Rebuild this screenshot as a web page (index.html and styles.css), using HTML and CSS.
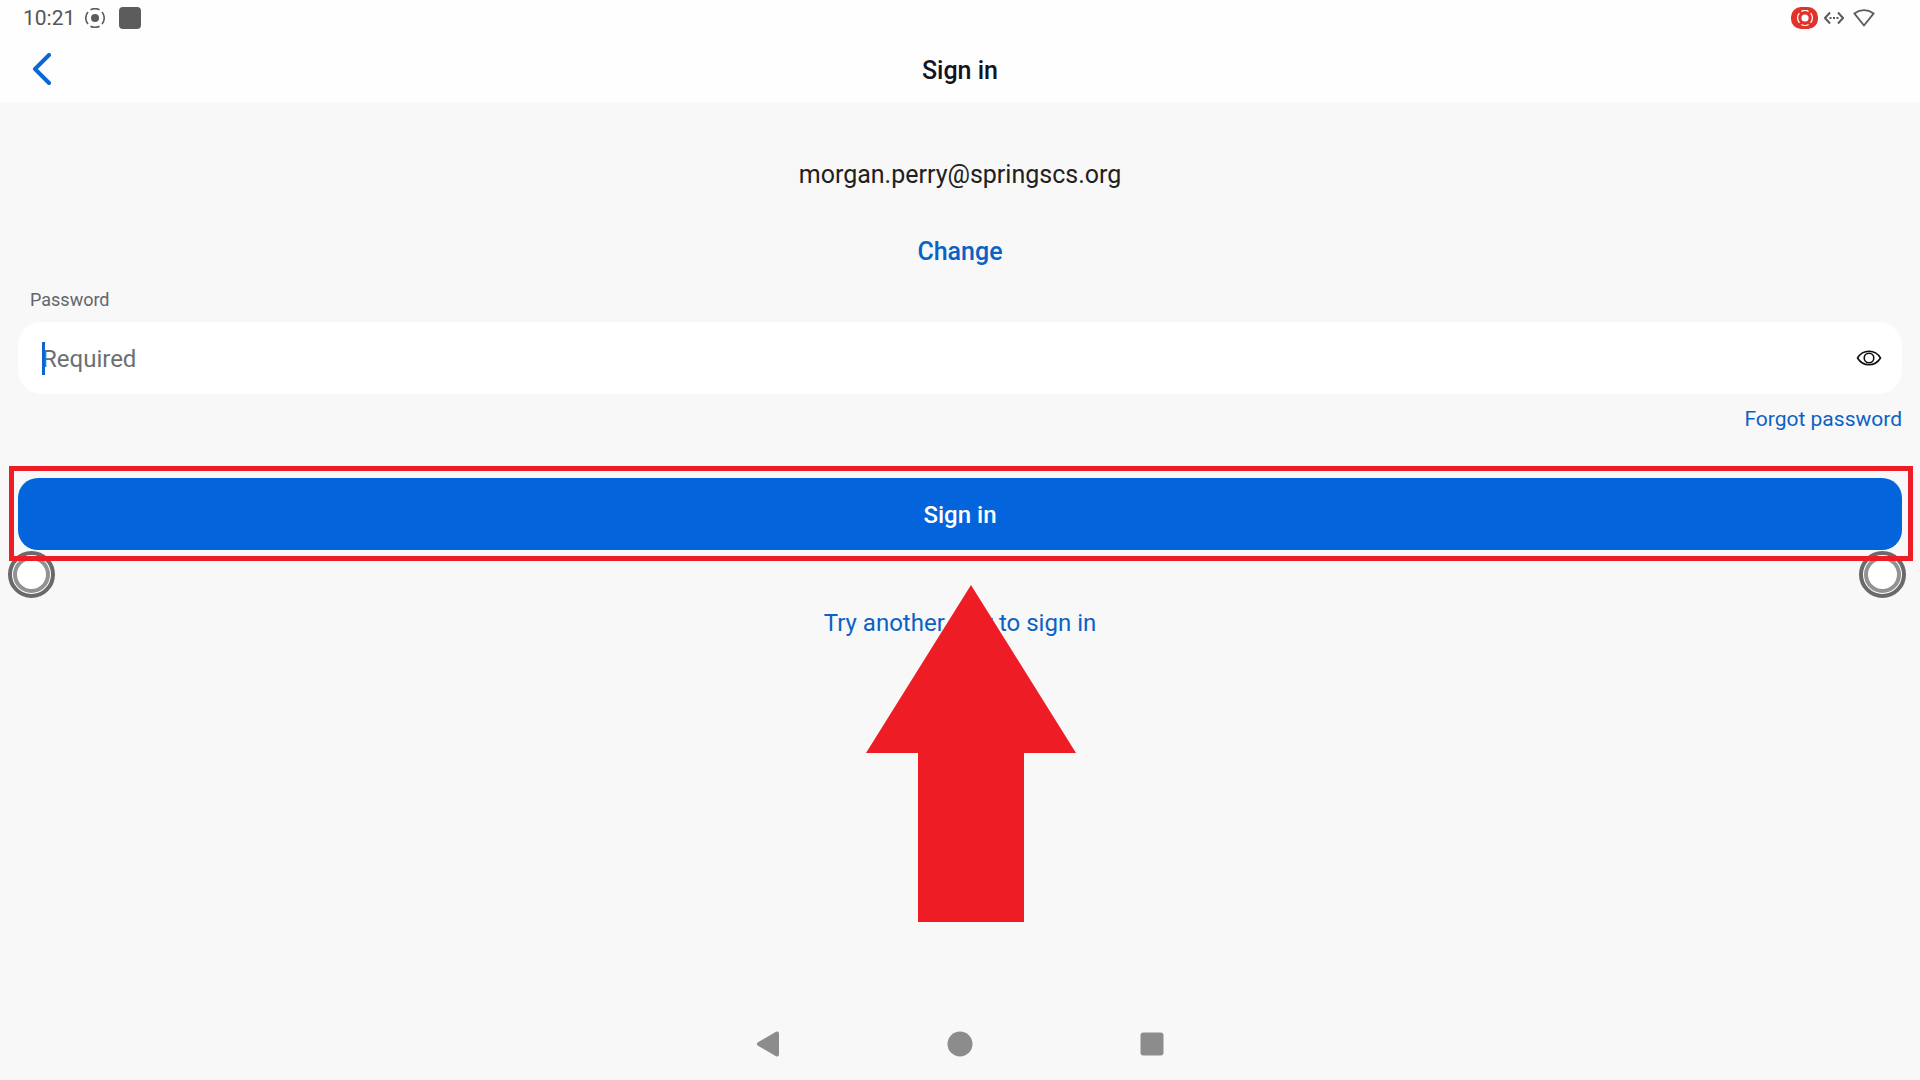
FILE: index.html
```html
<!DOCTYPE html>
<html lang="en">
<head>
<meta charset="UTF-8" />
<meta name="viewport" content="width=device-width, initial-scale=1" />
<title>Sign in</title>
<link rel="stylesheet" href="styles.css">
</head>
<body>

<div class="status-bar">
  <div class="status-left">
    <span class="clock">10:21</span>
    <svg class="record-icon" width="20" height="20" viewBox="0 0 20 20">
      <circle cx="10" cy="10" r="4" fill="#5c5c5c" />
      <path d="M5.5 1.8A9.4 9.4 0 0 1 14.500 1.800M17 4A9.200 9.200 0 0 1 17 16M14.500 18.200A9.400 9.400 0 0 1 5.500 18.200M3 16A9.200 9.200 0 0 1 3 4" fill="none" stroke="#5c5c5c" stroke-width="1.6" />
    </svg>
    <span class="app-square"></span>
  </div>
  <div class="status-right">
    <span class="cast-badge">
      <svg width="16" height="16" viewBox="0 0 20 20">
        <circle cx="10" cy="10" r="4.5" fill="#fff" />
        <path d="M5.5 1.8A9.4 9.4 0 0 1 14.500 1.800M17 4A9.200 9.200 0 0 1 17 16M14.500 18.200A9.400 9.400 0 0 1 5.500 18.200M3 16A9.200 9.200 0 0 1 3 4" fill="none" stroke="#fff" stroke-width="1.6" />
      </svg>
    </span>
    <svg width="20" height="14" viewBox="0 0 20 14">
      <path d="M6 1.5L1 7L6 12.5M14 1.5L19 7L14 12.5" fill="none" stroke="#5c5c5c" stroke-width="2" />
      <path d="M5.5 7h2M9 7h2M12.5 7h2" stroke="#5c5c5c" stroke-width="2" />
    </svg>
    <svg class="wifi-icon" width="22" height="18" viewBox="0 0 22 18">
      <path d="M1.3 4.4Q11 -2 20.7 4.4L11 16.5Z" fill="none" stroke="#5c5c5c" stroke-width="1.8" stroke-linejoin="round" />
    </svg>
  </div>
</div>

<header>
  <button class="btn-back" type="button" aria-label="Back">
    <svg width="20" height="32" viewBox="0 0 20 32">
      <path d="M17 2L3 16L17 30" fill="none" stroke="#0b67d3" stroke-width="4" stroke-linecap="round" stroke-linejoin="round" />
    </svg>
  </button>
  <h1>Sign in</h1>
</header>

<main>
  <form>
    <p class="email">morgan.perry@springscs.org</p>
    <a class="change" href="#">Change</a>

    <label for="password">Password</label>
    <div class="field">
      <input id="password" type="password" placeholder="Required" />
      <span class="caret"></span>
      <button class="btn-eye" type="button" aria-label="Show password">
        <svg width="26" height="18" viewBox="0 0 26 18">
          <path d="M1.5 9C7 0 19 0 24.5 9C19 18 7 18 1.5 9Z" fill="none" stroke="#111" stroke-width="1.6" stroke-linejoin="round" />
          <circle cx="13" cy="9" r="4.8" fill="none" stroke="#111" stroke-width="1.6" />
        </svg>
      </button>
    </div>
    <a class="forgot" href="#">Forgot password</a>

    <div class="submit">
      <button class="btn-sign-in" type="submit">Sign in</button>
      <span class="handle handle-left"></span>
      <span class="handle handle-right"></span>
      <span class="highlight"></span>
      <svg class="arrow" width="210" height="337" viewBox="0 0 210 337">
        <path d="M105 0L210 168H158V337H52V168H0Z" fill="#ee1c24" />
      </svg>
    </div>
    <a class="another" href="#">Try another way to sign in</a>
  </form>
</main>

<nav>
  <button type="button" aria-label="Back">
    <svg width="26" height="26" viewBox="0 0 26 26">
      <path d="M4 13L22 2.5V23.5Z" fill="#8c8c8c" stroke="#8c8c8c" stroke-width="4" stroke-linejoin="round" />
    </svg>
  </button>
  <button type="button" aria-label="Home">
    <svg width="26" height="26" viewBox="0 0 26 26">
      <circle cx="13" cy="13" r="12.5" fill="#8c8c8c" />
    </svg>
  </button>
  <button type="button" aria-label="Recent apps">
    <svg width="26" height="26" viewBox="0 0 26 26">
      <rect x="1.5" y="1.5" width="23" height="23" rx="3" fill="#8c8c8c" />
    </svg>
  </button>
</nav>

</body>
</html>
```
FILE: styles.css
```css
* {
  box-sizing: border-box;
}
body {
  font-family: Roboto, "Liberation Sans", sans-serif;
  background: #f8f8f8;
  color: #212121;
  margin: 0;
  min-height: 100vh;
  display: flex;
  flex-direction: column;
}
button {
  font-family: inherit;
  background: none;
  border: none;
  padding: 0;
  cursor: pointer;
}
svg {
  display: block;
}
a {
  color: #0b62c4;
  text-decoration: none;
}

/* Status bar */
.status-bar {
  background: #fefefe;
  height: 36px;
  padding: 0 45px 0 23px;
  display: flex;
  justify-content: space-between;
  align-items: center;
}
.status-left, .status-right {
  display: flex;
  align-items: center;
}
.clock {
  font-size: 21px;
  color: #555;
}
.record-icon {
  margin: 0 14px 0 10px;
}
.app-square {
  width: 22px;
  height: 22px;
  border-radius: 4px;
  background: #5c5c5c;
}
.status-right {
  gap: 6px;
}
.wifi-icon {
  margin-left: 3px;
}
.cast-badge {
  width: 27px;
  height: 22px;
  border-radius: 10px;
  background: #e2332b;
  display: flex;
  align-items: center;
  justify-content: center;
}

/* Header */
header {
  background: #fefefe;
  height: 66px;
  padding: 0 32px;
  display: grid;
  grid-template-columns: 1fr auto 1fr;
  align-items: center;
}
.btn-back {
  justify-self: start;
}
h1 {
  margin: 0;
  padding-top: 4px;
  font-size: 25px;
  line-height: 32px;
  font-weight: 500;
  color: #14141f;
}

/* Form */
main {
  flex: 1;
  padding: 57px 18px 0;
}
form {
  display: flex;
  flex-direction: column;
}
.email {
  margin: 0 0 45px;
  font-size: 25px;
  line-height: 32px;
  text-align: center;
}
.change {
  align-self: center;
  font-size: 25px;
  line-height: 32px;
  font-weight: 500;
}
label {
  margin: 20px 12px 10px;
  font-size: 18px;
  line-height: 24px;
  color: #62666c;
}
.field {
  position: relative;
  display: flex;
  align-items: center;
  height: 72px;
  padding: 0 20px 0 24px;
  background: #fff;
  border-radius: 24px;
}
.field input {
  flex: 1;
  padding: 2px 0 0;
  border: none;
  outline: none;
  background: none;
  font-family: inherit;
  font-size: 24px;
  line-height: 32px;
}
.field input::placeholder {
  color: #6b6f75;
  opacity: 1;
}
.caret {
  position: absolute;
  left: 24px;
  top: 20px;
  width: 3px;
  height: 33px;
  background: #1265cf;
}
.forgot {
  align-self: flex-end;
  margin: 13px 0 47px;
  font-size: 21px;
  line-height: 24px;
}
.submit {
  position: relative;
}
.btn-sign-in {
  display: block;
  width: 100%;
  height: 72px;
  padding-top: 2px;
  border-radius: 20px;
  background: #0364dc;
  color: #fff;
  font-size: 24px;
  line-height: 32px;
  font-weight: 500;
}
.another {
  align-self: center;
  margin-top: 57px;
  font-size: 24px;
  line-height: 32px;
}

/* Round handles under the button corners */
.handle {
  position: absolute;
  top: 73px;
  width: 47px;
  height: 47px;
  border: 4px solid #6a6a6a;
  border-radius: 50%;
  background: #fff;
}
.handle::after {
  content: "";
  position: absolute;
  inset: 1px;
  border: 4px solid #929292;
  border-radius: 50%;
}
.handle-left {
  left: -10px;
}
.handle-right {
  right: -4px;
}

/* Red callout */
.highlight {
  position: absolute;
  inset: -12px -11px -11px -9px;
  border: 5px solid #ee1c24;
  pointer-events: none;
}
.arrow {
  position: absolute;
  top: 107px;
  left: calc(50% - 94px);
  pointer-events: none;
}

/* Android navigation */
nav {
  display: flex;
  justify-content: center;
  gap: 166px;
  padding-bottom: 23px;
}
```
